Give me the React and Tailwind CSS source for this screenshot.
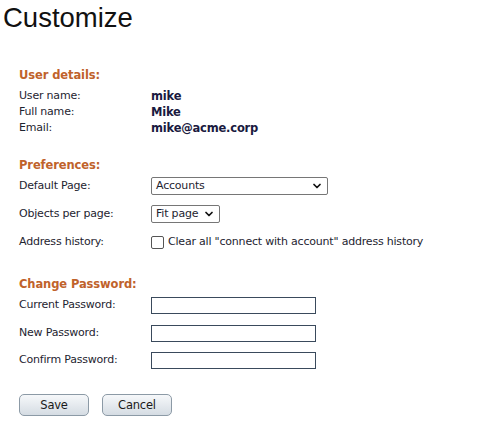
import { ChevronDown } from 'lucide-react';

const font = { fontFamily: '"DejaVu Sans", Verdana, sans-serif' };

function Section({ title, mb = 'mb-[5px]', children }) {
    return (
        <div className="flex flex-col">
            <h2 className={`text-[11.5px] font-bold text-[#c0622b] leading-[16px] tracking-[-0.1px] ${mb}`}>{title}</h2>
            {children}
        </div>
    );
}

function Row({ label, children, h = 'h-[28px]' }) {
    return (
        <div className={`flex items-center ${h}`}>
            <div className="w-[132px] shrink-0">{label}</div>
            {children}
        </div>
    );
}

function Select({ value, width }) {
    return (
        <div className={`${width} h-[18px] flex items-center justify-between border border-[#767676] rounded-[2px] pl-[4px] pr-[4px] bg-white`}>
            <span>{value}</span>
            <ChevronDown size={12} strokeWidth={3.5} className="text-[#111]" />
        </div>
    );
}

function TextBox() {
    return <input type="password" className="w-[165px] h-[17px] border border-[#3a4a5c] bg-white outline-none" />;
}

function Button({ children }) {
    return (
        <button className="w-[70px] h-[22px] rounded-[5px] border border-[#8c9aa6] bg-gradient-to-b from-[#f6f8fa] to-[#d5dce3] text-[11.5px] text-[#1a1a1a]">
            {children}
        </button>
    );
}

export default function App() {
    return (
        <div className="w-[477px] h-[443px] bg-white text-[#1e2430] text-[11px] leading-[16px] tracking-[-0.2px]" style={font}>
            <h1 className="text-[27.5px] leading-[32px] pl-[3px] pt-[2px] text-[#111] font-normal tracking-normal" style={{ fontFamily: '"Liberation Sans", Arial, sans-serif' }}>
                Customize
            </h1>

            <div className="pl-[19px] pt-[33px] flex flex-col">
                <Section title="User details:" mb="mb-[5px]">
                    <Row label="User name:" h="h-[16px]"><span className="font-bold text-[#1a1a40] text-[11.5px]">mike</span></Row>
                    <Row label="Full name:" h="h-[16px]"><span className="font-bold text-[#1a1a40] text-[11.5px]">Mike</span></Row>
                    <Row label="Email:" h="h-[16px]"><span className="font-bold text-[#1a1a40] text-[11.5px]">mike@acme.corp</span></Row>
                </Section>

                <div className="h-[21px]" />
                <Section title="Preferences:" mb="mb-[3px]">
                    <Row label="Default Page:" h="h-[20px]"><Select value="Accounts" width="w-[177px]" /></Row>
                    <div className="h-[8px]" />
                    <Row label="Objects per page:" h="h-[20px]"><Select value="Fit page" width="w-[69px]" /></Row>
                    <div className="h-[8px]" />
                    <Row label="Address history:" h="h-[20px]">
                        <div className="flex items-center gap-[4px]">
                            <span className="w-[13px] h-[13px] border border-[#555] rounded-[2px] bg-white" />
                            <span>Clear all "connect with account" address history</span>
                        </div>
                    </Row>
                </Section>

                <div className="h-[24px]" />
                <Section title="Change Password:" mb="mb-[2px]">
                    <Row label="Current Password:" h="h-[22px]"><TextBox /></Row>
                    <div className="h-[6px]" />
                    <Row label="New Password:" h="h-[22px]"><TextBox /></Row>
                    <div className="h-[5px]" />
                    <Row label="Confirm Password:" h="h-[22px]"><TextBox /></Row>
                </Section>

                <div className="flex gap-[13px] mt-[23px]">
                    <Button>Save</Button>
                    <Button>Cancel</Button>
                </div>
            </div>
        </div>
    );
}
